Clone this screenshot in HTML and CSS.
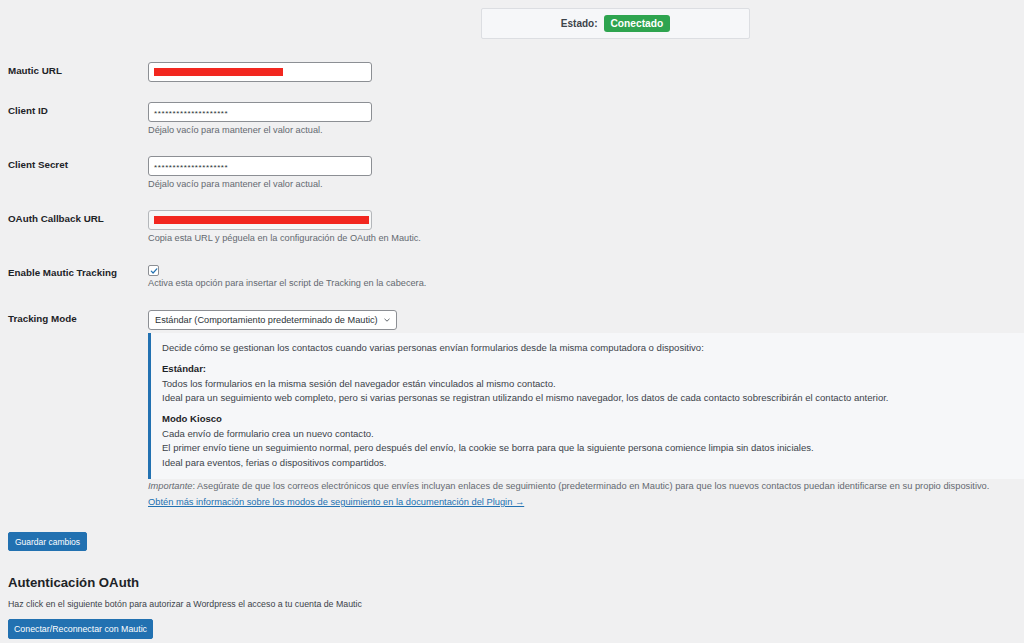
FILE: index.html
```html
<!doctype html>
<html lang="es">

<head>
    <meta charset="UTF-8">
    <title>Mautic - Ajustes</title>
    <link rel="stylesheet" href="styles.css">
</head>

<body>
    <div class="wrap">
        <div class="status">
            <span class="status_label">Estado:</span>
            <span class="badge">Conectado</span>
        </div>

        <div class="form">
            <div class="row">
                <div class="label">Mautic URL</div>
                <div class="field">
                    <div class="input">
                        <span class="redact redact_short"></span>
                    </div>
                </div>
            </div>

            <div class="row">
                <div class="label">Client ID</div>
                <div class="field">
                    <div class="input"><span class="stars">********************</span></div>
                    <p class="help">Déjalo vacío para mantener el valor actual.</p>
                </div>
            </div>

            <div class="row">
                <div class="label">Client Secret</div>
                <div class="field">
                    <div class="input"><span class="stars">********************</span></div>
                    <p class="help">Déjalo vacío para mantener el valor actual.</p>
                </div>
            </div>

            <div class="row">
                <div class="label">OAuth Callback URL</div>
                <div class="field">
                    <div class="input readonly">
                        <span class="redact redact_long"></span>
                    </div>
                    <p class="help">Copia esta URL y péguela en la configuración de OAuth en Mautic.</p>
                </div>
            </div>

            <div class="row">
                <div class="label">Enable Mautic Tracking</div>
                <div class="field">
                    <span class="checkbox">
                        <svg width="8" height="8" viewBox="0 0 8 8"><path d="M1.3 4.2 L3.1 6 L6.8 1.8" fill="none" stroke="#2271b1" stroke-width="1.2" stroke-linecap="round" stroke-linejoin="round"/></svg>
                    </span>
                    <p class="help help_check">Activa esta opción para insertar el script de Tracking en la cabecera.</p>
                </div>
            </div>

            <div class="row row_mode">
                <div class="label">Tracking Mode</div>
                <div class="field">
                    <div class="select">
                        <span>Estándar (Comportamiento predeterminado de Mautic)</span>
                        <svg width="8" height="6" viewBox="0 0 8 6"><path d="M1.5 1.8 L4 4.2 L6.5 1.8" fill="none" stroke="#50575e" stroke-width="0.9"/></svg>
                    </div>
                    <div class="info">
                        <p>Decide cómo se gestionan los contactos cuando varias personas envían formularios desde la misma computadora o dispositivo:</p>
                        <p><strong>Estándar:</strong><br>
                            Todos los formularios en la misma sesión del navegador están vinculados al mismo contacto.<br>
                            Ideal para un seguimiento web completo, pero si varias personas se registran utilizando el mismo navegador, los datos de cada contacto sobrescribirán el contacto anterior.</p>
                        <p><strong>Modo Kiosco</strong><br>
                            Cada envío de formulario crea un nuevo contacto.<br>
                            El primer envío tiene un seguimiento normal, pero después del envío, la cookie se borra para que la siguiente persona comience limpia sin datos iniciales.<br>
                            Ideal para eventos, ferias o dispositivos compartidos.</p>
                    </div>
                    <p class="note"><em>Importante</em>: Asegúrate de que los correos electrónicos que envíes incluyan enlaces de seguimiento (predeterminado en Mautic) para que los nuevos contactos puedan identificarse en su propio dispositivo.</p>
                    <p class="note note_link"><a href="#">Obtén más información sobre los modos de seguimiento en la documentación del Plugin →</a></p>
                </div>
            </div>
        </div>

        <button type="button" class="btn btn_save">Guardar cambios</button>

        <h2 class="title">Autenticación OAuth</h2>
        <p class="intro">Haz click en el siguiente botón para autorizar a Wordpress el acceso a tu cuenta de Mautic</p>
        <button type="button" class="btn btn_connect">Conectar/Reconnectar con Mautic</button>
    </div>
</body>

</html>
```

FILE: styles.css
```css
* {
    margin: 0;
    padding: 0;
    box-sizing: border-box;
}

html,
body {
    background-color: #f0f0f1;
    overflow: hidden;
}

body {
    font-family: "Liberation Sans", Arial, sans-serif;
    color: #3c434a;
    font-size: 9px;
}

a {
    color: #2271b1;
}

.wrap {
    padding: 8px 0 0 8px;
}

/* estado */
.status {
    width: 269px;
    height: 31px;
    margin-left: 473px;
    background-color: #f6f7f9;
    border: 1px solid #dcdee2;
    border-radius: 2px;
    display: flex;
    align-items: center;
    justify-content: center;
    gap: 6px;
}

.status_label {
    font-weight: bold;
    font-size: 10px;
    color: #3c434a;
}

.badge {
    background-color: #2ea44f;
    color: #fff;
    font-weight: bold;
    font-size: 10.2px;
    border-radius: 3px;
    padding: 0 7px;
    height: 17px;
    line-height: 17px;
}

/* formulario */
.form {
    margin-top: 23px;
    display: flex;
    flex-direction: column;
    gap: 20px;
}

.row {
    display: flex;
}

.row_mode {
    margin-top: 1px;
}

.label {
    width: 140px;
    flex: none;
    padding-top: 3px;
    font-size: 9.8px;
    line-height: 12px;
    font-weight: bold;
    color: #1d2327;
}

.field {
    flex: 1;
}

.input {
    width: 224px;
    height: 20px;
    background-color: #fff;
    border: 1px solid #8c8f94;
    border-radius: 3px;
    padding: 0 5px;
    display: flex;
    align-items: center;
    position: relative;
    overflow: hidden;
}

.input.readonly {
    background-color: #f6f7f7;
    border-color: #b4b7bb;
}

.stars {
    font-size: 8px;
    letter-spacing: 0.6px;
    color: #2c3338;
    padding-top: 3px;
}

.redact {
    position: absolute;
    left: 5px;
    top: 5px;
    height: 8px;
    background-color: #f2271f;
}

.redact_short {
    width: 129px;
}

.redact_long {
    width: 215px;
}

.help {
    margin-top: 2px;
    line-height: 12px;
    font-size: 9.2px;
    color: #646970;
}

.help_check {
    margin-top: 1px;
}

.checkbox {
    display: flex;
    align-items: center;
    justify-content: center;
    width: 11px;
    height: 11px;
    margin-top: 1px;
    background-color: #fff;
    border: 1px solid #8c8f94;
    border-radius: 2px;
}

.select {
    width: 249px;
    height: 20px;
    background-color: #fff;
    border: 1px solid #8c8f94;
    border-radius: 3px;
    padding: 0 5px 0 6px;
    display: flex;
    align-items: center;
    justify-content: space-between;
    font-size: 9.2px;
    color: #2c3338;
}

.info {
    margin-top: 3px;
    background-color: #f6f7f9;
    border-left: 3px solid #2271b1;
    padding: 8px 12px 9px 11px;
    font-size: 9.55px;
    line-height: 14.5px;
    color: #3c434a;
}

.info p {
    margin-bottom: 6.5px;
}

.info p:last-child {
    margin-bottom: 0;
}

.info strong {
    color: #1d2327;
}

.note {
    font-size: 9.3px;
    line-height: 14px;
    color: #646970;
}

.note_link {
    margin-top: 2px;
}

/* botones */
.btn {
    display: block;
    background-color: #2271b1;
    border: 1px solid #2271b1;
    border-radius: 2px;
    color: #fff;
    font-family: "Liberation Sans", Arial, sans-serif;
    font-size: 8.5px;
    white-space: nowrap;
    text-align: center;
}

.btn_save {
    margin-top: 23px;
    height: 19px;
    width: 79px;
}

.btn_connect {
    height: 20px;
    width: 145px;
    font-size: 8.8px;
}

.title {
    margin-top: 24px;
    font-size: 13.2px;
    font-weight: 600;
    color: #1d2327;
    line-height: 16px;
}

.intro {
    margin-top: 7px;
    font-size: 8.8px;
    line-height: 12px;
    color: #3c434a;
}

.intro + .btn {
    margin-top: 9px;
}
```
